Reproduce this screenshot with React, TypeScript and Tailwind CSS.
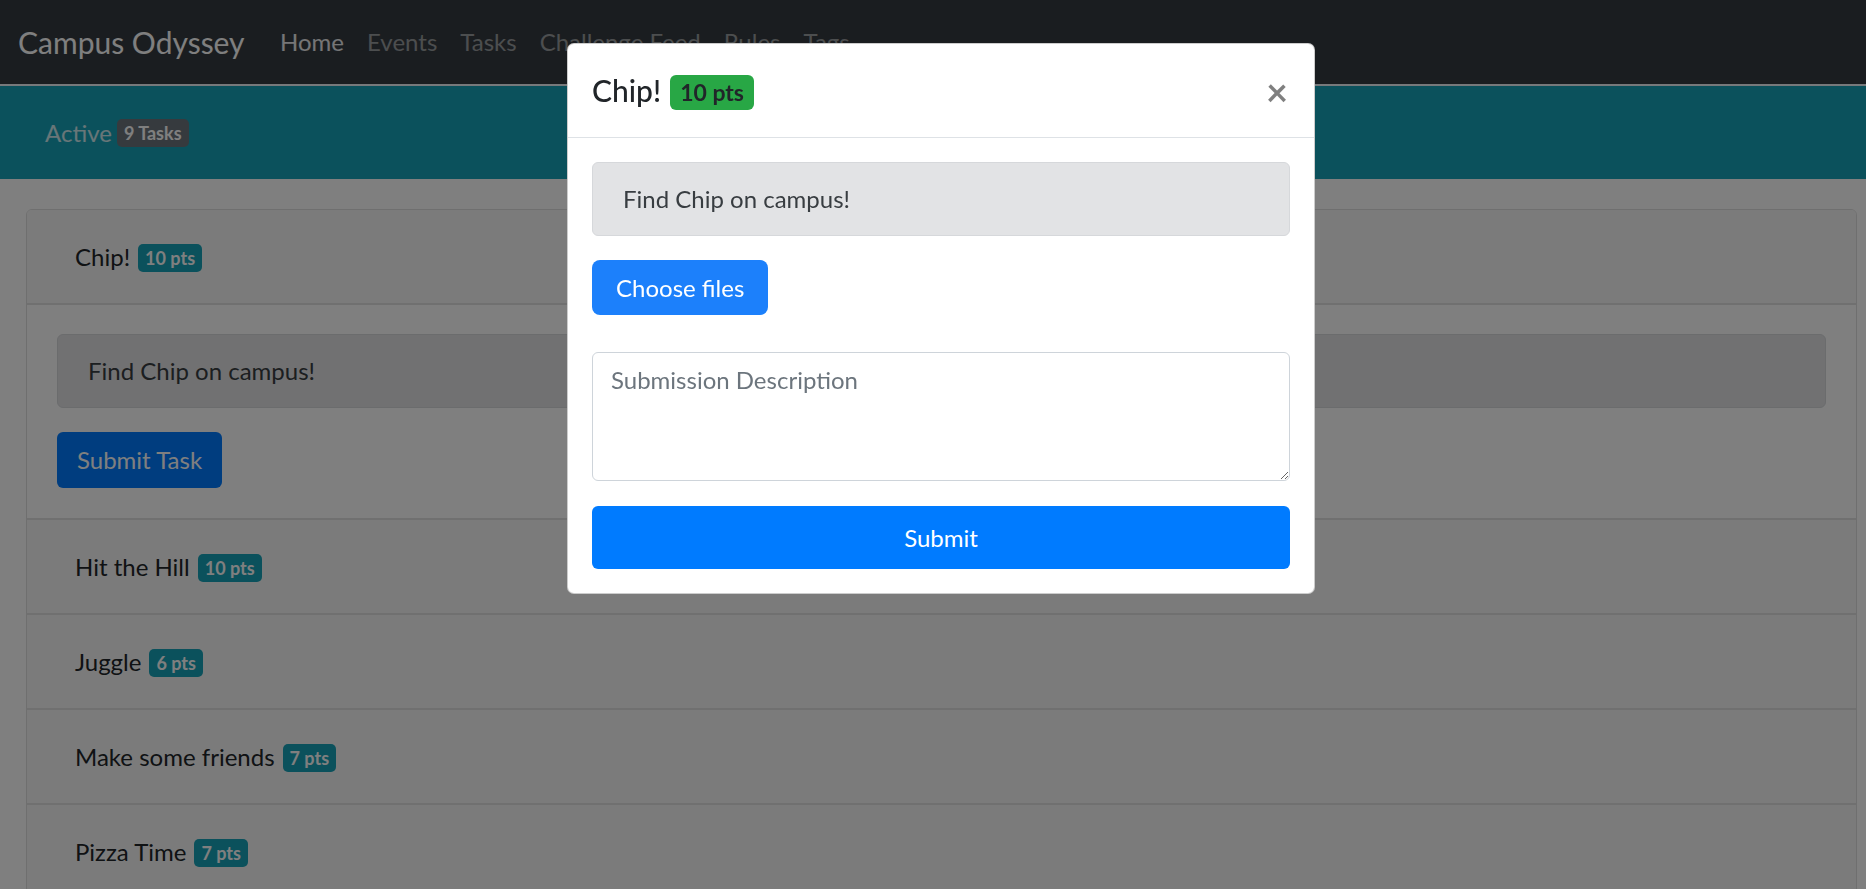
import React from "react";

const tasks = [
  { title: "Hit the Hill", pts: 10 },
  { title: "Juggle", pts: 6 },
  { title: "Make some friends", pts: 7 },
  { title: "Pizza Time", pts: 7 },
];

const navLinks = ["Home", "Events", "Tasks", "Challenge Feed", "Rules", "Tags"];

function PtsBadge({ pts }: { pts: number }) {
  return (
    <span className="ml-[8px] inline-block rounded-[5px] bg-[#17a2b8] px-[7px] py-[5px] align-[1px] text-[18px] font-bold leading-none text-white">
      {pts} pts
    </span>
  );
}

function TaskHeader({ title, pts }: { title: string; pts: number }) {
  return (
    <div className="flex h-[95px] items-center border-b-2 border-[#e0e0e0] bg-[#f7f7f7] px-[30px]">
      <span className="pl-[18px] text-[24px] leading-[36px] text-[#212529]">
        {title}
        <PtsBadge pts={pts} />
      </span>
    </div>
  );
}

function SubmitModal() {
  return (
    <div className="fixed left-[567px] top-[43px] w-[748px] rounded-[7px] border-[1.5px] border-black/20 bg-white">
      <div className="flex h-[94px] items-center justify-between border-b-[1.5px] border-[#dee2e6] px-6">
        <h5 className="text-[30px] font-medium leading-[45px] text-[#212529]">
          Chip!
          <span className="ml-[9px] inline-block rounded-[6px] bg-[#28a745] px-[10px] py-[6px] align-[1px] text-[23px] font-bold leading-none text-[#212529]">
            10 pts
          </span>
        </h5>
        <button className="mr-[2px] text-[38px] font-bold leading-none text-black/50">×</button>
      </div>
      <div className="p-6">
        <div className="mb-6 rounded-[6px] border-[1.5px] border-[#d6d8db] bg-[#e2e3e5] px-[30px] py-[18px] text-[24px] leading-[36px] text-[#383d41]">
          Find Chip on campus!
        </div>
        <button className="h-[55px] rounded-[8px] bg-[#1c80fb] px-[24px] text-[24px] text-white">
          Choose files
        </button>
        <textarea
          rows={3}
          placeholder="Submission Description"
          className="mt-[37px] block h-[129px] w-full rounded-[6px] border-[1.5px] border-[#ced4da] px-[18px] py-[9px] text-[24px] leading-[36px] text-[#495057] placeholder:text-[#6c757d]"
        />
        <button className="mt-[25px] h-[63px] w-full rounded-[6px] bg-[#007bff] text-[24px] text-white">
          Submit
        </button>
      </div>
    </div>
  );
}

export default function App() {
  return (
    <div className="relative h-screen overflow-hidden bg-white font-['Lato',sans-serif]">
      <nav className="flex h-[84px] items-center bg-[#343a40] pl-[18px]">
        <span className="mr-[24px] text-[30px] leading-[45px] text-white">Campus Odyssey</span>
        {navLinks.map((link) => (
          <span
            key={link}
            className={
              link === "Home"
                ? "px-[11.5px] text-[24px] leading-[36px] text-white/90"
                : "px-[11.5px] text-[24px] leading-[36px] text-white/50"
            }
          >
            {link}
          </span>
        ))}
      </nav>
      <div className="h-[2px] bg-[#eef3f6]" />
      <div className="flex h-[93px] items-center bg-[#17a2b8] px-[45px]">
        <span className="text-[24px] leading-[36px] text-white/80">
          Active
          <span className="ml-[5px] inline-block rounded-[5px] bg-[#6c757d] px-[7px] py-[5px] align-[2px] text-[18px] font-bold leading-none text-white">
            9 Tasks
          </span>
        </span>
      </div>

      <div className="ml-[26px] mr-[9px] mt-[30px] overflow-hidden rounded-[6px] border-[1.5px] border-[#dfdfdf] bg-white">
        <TaskHeader title="Chip!" pts={10} />
        <div className="border-b-2 border-[#e0e0e0] px-[30px] pb-[30px] pt-[29px]">
          <div className="mb-6 rounded-[6px] border-[1.5px] border-[#d6d8db] bg-[#e2e3e5] px-[30px] py-[18px] text-[24px] leading-[36px] text-[#383d41]">
            Find Chip on campus!
          </div>
          <button className="h-[56px] rounded-[6px] bg-[#007bff] px-[20px] text-[24px] text-white">
            Submit Task
          </button>
        </div>
        {tasks.map((t) => (
          <TaskHeader key={t.title} title={t.title} pts={t.pts} />
        ))}
      </div>

      <div className="fixed inset-0 bg-black/50" />
      <SubmitModal />
    </div>
  );
}
